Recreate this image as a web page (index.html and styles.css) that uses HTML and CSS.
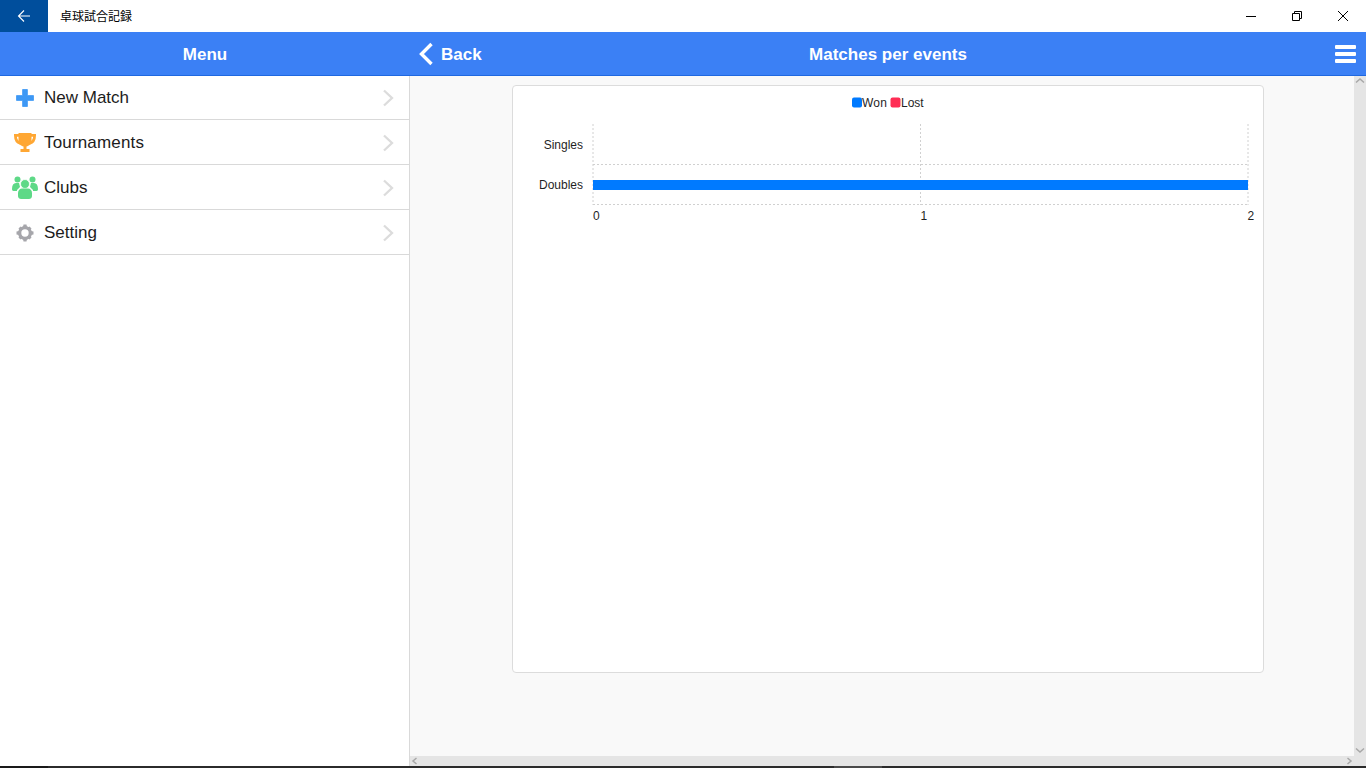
FILE: index.html
```html
<!DOCTYPE html>
<html lang="ja">
<head>
<meta charset="utf-8">
<title>卓球試合記録</title>
<link rel="stylesheet" href="styles.css">
</head>
<body>
<div class="app">
  <div class="titlebar">
    <div class="tb-back">
      <svg width="16" height="16" viewBox="0 0 16 16"><path d="M14 8H2.500M8 2.500 2.500 8 8 13.500" fill="none" stroke="#fff" stroke-width="1.100"/></svg>
    </div>
    <div class="tb-title">卓球試合記録</div>
    <div class="tb-controls">
      <div class="tb-btn"><svg width="12" height="12" viewBox="0 0 12 12"><path d="M1 6.500h10" stroke="#000" fill="none"/></svg></div>
      <div class="tb-btn"><svg width="12" height="12" viewBox="0 0 12 12"><path d="M1.500 3.500h7v7h-7zM3.500 3.500v-2h7v7h-2" stroke="#000" fill="none"/></svg></div>
      <div class="tb-btn"><svg width="12" height="12" viewBox="0 0 12 12"><path d="M1 1l10 10M11 1 1 11" stroke="#000" fill="none"/></svg></div>
    </div>
  </div>
  <div class="body">
    <aside class="sidebar">
      <div class="navbar side-nav">Menu</div>
      <ul class="menu">
        <li class="menu-row">
          <span class="menu-icon"><svg width="20" height="20" viewBox="0 0 20 20"><path d="M7.600 1.500h4.800v6.100h6.100v4.800h-6.100v6.100H7.600v-6.100H1.500V7.600h6.100z" fill="#3d98f5" stroke="#3d98f5" stroke-width=".8" stroke-linejoin="round"/></svg></span>
          <span class="menu-label">New Match</span>
          <svg class="chev" width="12" height="18" viewBox="0 0 12 18"><path d="M2 1.500 10 9l-8 7.500" fill="none" stroke="#dcdcdc" stroke-width="2.300"/></svg>
        </li>
        <li class="menu-row">
          <span class="menu-icon"><svg width="24" height="22" viewBox="0 0 24 22"><path d="M5.500 1h13v8c0 3-2.500 5-5 5.500V17h3v3h-9v-3h3v-2.500C8 14 5.500 12 5.500 9z" fill="#ffa733"/><path d="M6 3.400H2.400c0 4.600 2 7 5.100 8M18 3.400h3.600c0 4.600-2 7-5.100 8" fill="none" stroke="#ffa733" stroke-width="2.800"/></svg></span>
          <span class="menu-label menu-label-wide">Tournaments</span>
          <svg class="chev" width="12" height="18" viewBox="0 0 12 18"><path d="M2 1.500 10 9l-8 7.500" fill="none" stroke="#dcdcdc" stroke-width="2.300"/></svg>
        </li>
        <li class="menu-row">
          <span class="menu-icon"><svg width="26" height="24" viewBox="0 0 26 24"><g fill="#5ed987"><circle cx="5.500" cy="3.500" r="3"/><circle cx="20.500" cy="3.500" r="3"/><path d="M0 13c0-4 1.500-6 4-6h3l1 4-3 3v1H1.500C.5 15 0 14 0 13zM26 13c0-4-1.500-6-4-6h-3l-1 4 3 3v1h3.500c1 0 1.500-1 1.500-2z"/><circle cx="13" cy="8" r="4.500" stroke="#fff" stroke-width=".8"/><path d="M6 17c0-3 2-4.500 4-4.500h6c2 0 4 1.500 4 4.500v3c0 2-1.500 3-3 3H9c-1.500 0-3-1-3-3z"/></g></svg></span>
          <span class="menu-label">Clubs</span>
          <svg class="chev" width="12" height="18" viewBox="0 0 12 18"><path d="M2 1.500 10 9l-8 7.500" fill="none" stroke="#dcdcdc" stroke-width="2.300"/></svg>
        </li>
        <li class="menu-row">
          <span class="menu-icon"><svg width="20" height="20" viewBox="0 0 20 20"><g fill="#a6a6ab"><path fill-rule="evenodd" d="M10 3a7 7 0 1 0 0 14 7 7 0 0 0 0-14zm0 3.300a3.700 3.700 0 1 1 0 7.400 3.700 3.700 0 0 1 0-7.400z"/><path d="M8.500 1.500h3l.5 2.500H8zM8 16h4l-.5 2.500h-3zM1.500 8.500 4 8v4l-2.500-.5zM16 8l2.500.5v3L16 12zM3.500 5.500l2-2 2 1.500-2.500 2.500zM14.500 3.500l2 2L15 7.500 12.500 5zM5 12.500 7.500 15l-2 1.500-2-2zM15 12.500l1.500 2-2 2-2-1.500z"/></g></svg></span>
          <span class="menu-label">Setting</span>
          <svg class="chev" width="12" height="18" viewBox="0 0 12 18"><path d="M2 1.500 10 9l-8 7.500" fill="none" stroke="#dcdcdc" stroke-width="2.300"/></svg>
        </li>
      </ul>
    </aside>
    <main class="main">
      <div class="navbar main-nav">
        <div class="nav-back">
          <svg class="nav-chev" width="16" height="24" viewBox="0 0 16 24"><path d="M13.500 2 3.500 12l10 10" fill="none" stroke="#fff" stroke-width="3.400"/></svg>
          <span>Back</span>
        </div>
        <div class="nav-title">Matches per events</div>
        <div class="nav-burger"><i></i><i></i><i></i></div>
      </div>
      <div class="content">
        <section class="card">
          <svg class="chart" width="750" height="586" viewBox="0 0 750 586">
            <rect x="339" y="11.500" width="10" height="10" rx="2" fill="#007aff"/>
            <text class="t" x="349" y="21" textLength="25">Won</text>
            <rect x="377.500" y="11.500" width="10" height="10" rx="2" fill="#ff2d55"/>
            <text class="t" x="388" y="21">Lost</text>
            <g class="grid">
              <path d="M80 38v81M407.500 38v81M735 38v81M80 78.500h655M80 118.500h655"/>
            </g>
            <rect x="80" y="94" width="655" height="10" fill="#007aff"/>
            <text class="t" text-anchor="end" x="70" y="63">Singles</text>
            <text class="t" text-anchor="end" x="70" y="103">Doubles</text>
            <text class="t" x="80" y="134">0</text>
            <text class="t" x="407.500" y="134">1</text>
            <text class="t" x="734.500" y="134">2</text>
          </svg>
        </section>
        <div class="sb sb-v">
          <svg width="12" height="10" viewBox="0 0 12 10"><path d="M2 6.500 6 3l4 3.500" fill="none" stroke="#a8a8a8" stroke-width="1.500"/></svg>
          <svg width="12" height="10" viewBox="0 0 12 10"><path d="M2 3.500 6 7l4-3.500" fill="none" stroke="#a8a8a8" stroke-width="1.500"/></svg>
        </div>
        <div class="sb sb-h">
          <svg width="10" height="10" viewBox="0 0 10 10"><path d="M6.500 2 3 5l3.500 3" fill="none" stroke="#a8a8a8" stroke-width="1.500"/></svg>
          <svg width="10" height="10" viewBox="0 0 10 10"><path d="M3.500 2 7 5 3.500 8" fill="none" stroke="#a8a8a8" stroke-width="1.500"/></svg>
        </div>
      </div>
    </main>
  </div>
  <div class="taskstrip">
    <span class="ts-start"></span>
    <span class="ts-gap"></span>
    <span class="ts-active"></span>
  </div>
</div>
</body>
</html>
```
FILE: styles.css
```css
* { box-sizing: border-box; }
html, body { margin: 0; height: 100%; overflow: hidden; }
body { font-family: "Liberation Sans", Arial, sans-serif; background: #fff; }
.app { display: flex; flex-direction: column; width: 1366px; height: 768px; }
.titlebar { display: flex; align-items: center; height: 32px; flex: none; background: #fff; }
.tb-back { width: 48px; height: 32px; background: #004e9c; display: flex; align-items: center; justify-content: center; }
.tb-title { margin-left: 12px; padding-bottom: 2px; font: 12px "Noto Sans CJK JP", sans-serif; color: #000; flex: 1; }
.tb-controls { display: flex; }
.tb-btn { width: 46px; height: 32px; display: flex; align-items: center; justify-content: center; }
.body { display: flex; flex: 1; min-height: 0; }
.navbar { height: 44px; flex: none; padding-top: 2px; background: #3b80f5; border-bottom: 1px solid #1f68e0; color: #fff; font-weight: 700; font-size: 17px; }
.sidebar { width: 410px; flex: none; border-right: 1px solid #d9d9d9; display: flex; flex-direction: column; }
.side-nav { display: flex; align-items: center; justify-content: center; margin-right: -1px; }
.menu { list-style: none; margin: -1px 0 0; padding: 0; }
.menu-row { height: 45px; padding-top: 1px; display: flex; align-items: center; border-bottom: 1px solid #d9d9d9; }
.menu-icon { width: 44px; flex: none; display: flex; align-items: center; justify-content: center; padding-left: 5px; }
.menu-label { flex: 1; font-size: 17px; color: #1c1c1c; }
.menu-label-wide { letter-spacing: .17px; }
.chev { margin-right: 15px; }
.main { flex: 1; min-width: 0; display: flex; flex-direction: column; }
.main-nav { display: grid; grid-template-columns: 1fr auto 1fr; align-items: center; padding: 2px 8px 0; }
.nav-back { display: flex; align-items: center; gap: 7px; }
.nav-chev { margin-top: -2px; }
.nav-title { text-align: center; }
.nav-burger { justify-self: end; margin-right: 2px; margin-top: -1px; display: flex; flex-direction: column; gap: 2.670px; }
.nav-burger i { display: block; width: 21px; height: 4px; background: #fff; border-radius: 1px; }
.content { flex: 1; min-height: 0; background: #f9f9f9; position: relative; display: flex; justify-content: center; align-items: flex-start; padding-top: 9px; }
.card { width: 752px; height: 588px; background: #fff; border: 1px solid #dcdcdc; border-radius: 4px; }
.chart { display: block; }
.t { font: 12px "Liberation Sans", Arial, sans-serif; fill: #1f1f1f; }
.grid path { fill: none; stroke: #d0d0d0; stroke-width: 1; stroke-dasharray: 2 2; }
.sb { position: absolute; background: #e5e5e5; display: flex; justify-content: space-between; align-items: center; }
.sb-v { top: 0; right: 0; bottom: 0; width: 12px; flex-direction: column; padding-bottom: 11px; }
.sb-h { left: 0; right: 12px; bottom: 0; height: 10px; }
.taskstrip { height: 2px; flex: none; display: flex; background: #2b2b2b; }
.ts-start { width: 48px; background: #1a1a1a; }
.ts-gap { width: 786px; }
.ts-active { width: 48px; background: #4a4a4a; }
```
